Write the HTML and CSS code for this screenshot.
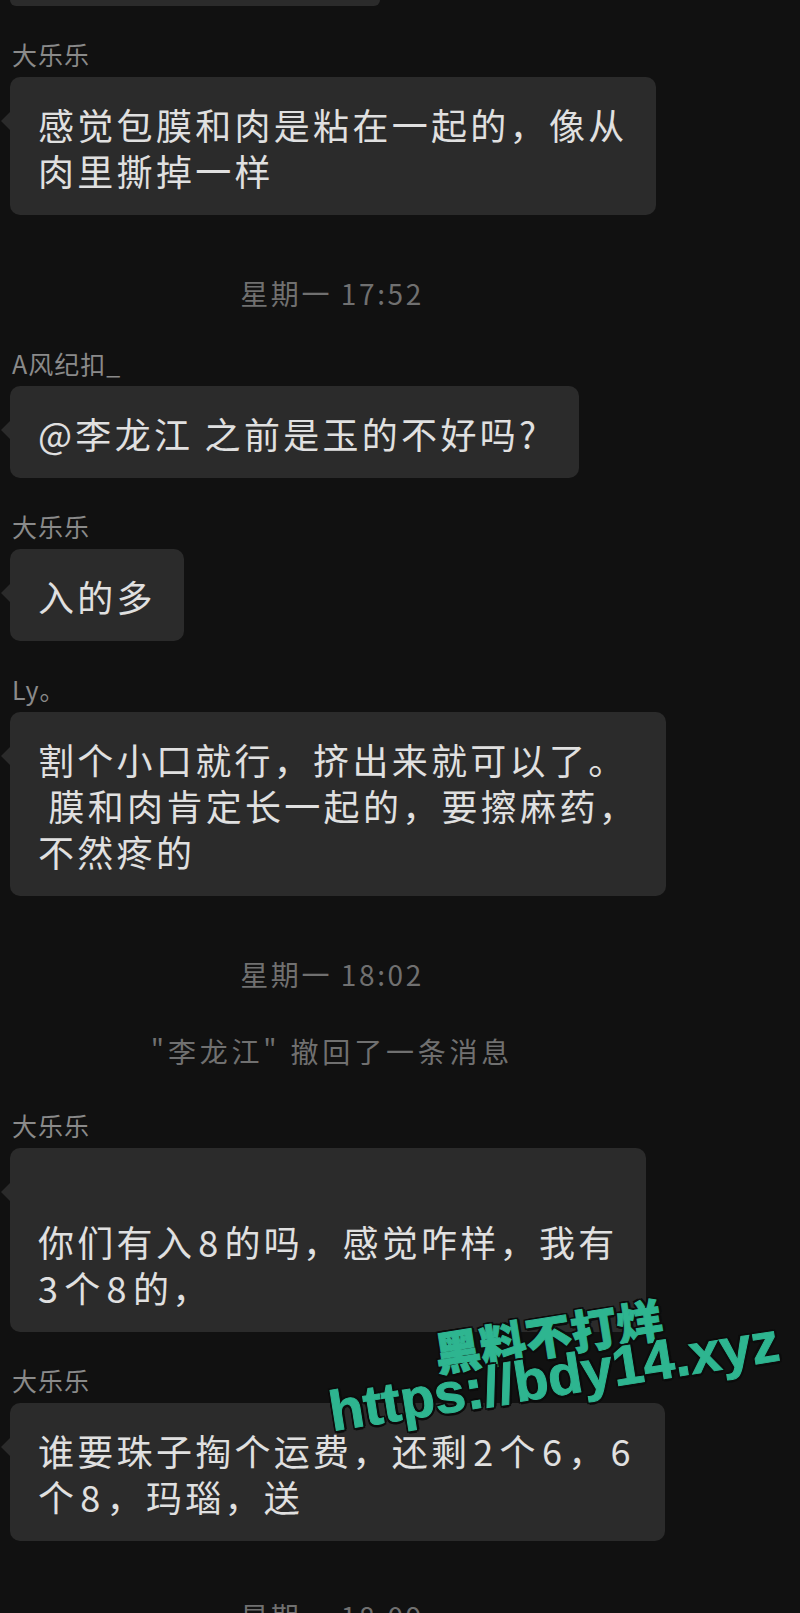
FILE: index.html
```html
<!DOCTYPE html>
<html lang="zh-CN">
<head>
    <meta charset="UTF-8">
    <meta name="viewport" content="width=device-width, initial-scale=1.0">
    <title>群聊</title>
    <link rel="stylesheet" href="styles.css">
</head>
<body>
    <div class="page">
        <div class="chat">
            <!-- previous message, scrolled off the top -->
            <div class="bubble-cut"></div>

            <div class="msg">
                <div class="name">大乐乐</div>
                <div class="bubble">感觉包膜和肉是粘在一起的，像从<br>肉里撕掉一样</div>
            </div>

            <div class="time">星期一 17:52</div>

            <div class="msg">
                <div class="name">A风纪扣_</div>
                <div class="bubble">@李龙江 之前是玉的不好吗?&nbsp;</div>
            </div>

            <div class="msg">
                <div class="name">大乐乐</div>
                <div class="bubble">入的多</div>
            </div>

            <div class="msg">
                <div class="name">Ly。</div>
                <div class="bubble">割个小口就行，挤出来就可以了。<br>&#8201;膜和肉肯定长一起的，要擦麻药，<br>不然疼的</div>
            </div>

            <div class="time">星期一 18:02</div>
            <div class="notice">"李龙江" 撤回了一条消息</div>

            <div class="msg">
                <div class="name">大乐乐</div>
                <div class="bubble"><br>你们有入<span class="num">8</span>的吗，感觉咋样，我有<br><span class="num first">3</span>个<span class="num">8</span>的，</div>
            </div>

            <div class="msg">
                <div class="name">大乐乐</div>
                <div class="bubble">谁要珠子掏个运费，还剩<span class="num">2</span>个<span class="num">6</span>，<span class="num">6</span><br>个<span class="num">8</span>，玛瑙，送</div>
            </div>

            <div class="time">星期一 18:09</div>
        </div>

        <!-- site watermark stamped over the screenshot -->
        <div class="watermark">
            <div class="wm-cn">黑料不打烊</div>
            <div class="wm-url">https://bdy14.xyz</div>
        </div>
    </div>
</body>
</html>
```

FILE: styles.css
```css
body {
    margin: 0;
    background-color: #111111;
    font-family: "Noto Sans CJK SC", "Noto Sans", sans-serif;
}

.page {
    position: relative;
    width: 800px;
    height: 1613px;
    overflow: hidden;
}

.chat {
    width: 664px;
}

.bubble-cut {
    width: 370px;
    height: 6px;
    margin-left: 10px;
    background: #2b2b2b;
    border-radius: 0 0 10px 10px;
}

.msg {
    margin-top: 33px;
    padding-left: 10px;
}

.name {
    padding-left: 2px;
    margin-bottom: 8px;
    font-size: 25px;
    line-height: 30px;
    letter-spacing: 1px;
    color: #8a8a8a;
}

.bubble {
    position: relative;
    display: inline-block;
    padding: 24px 28px 22px 28px;
    background: #2b2b2b;
    border-radius: 10px;
    color: #e0e0e0;
    font-size: 36px;
    line-height: 46px;
    letter-spacing: 3.3px;
    white-space: nowrap;
}

/* little tail on the left side */
.bubble::before {
    content: "";
    position: absolute;
    left: -9px;
    top: 35px;
    border-top: 9px solid transparent;
    border-bottom: 9px solid transparent;
    border-right: 9px solid #2b2b2b;
}

.num {
    margin: 0 3px;
}

.num.first {
    margin-left: 0;
}

.time,
.notice {
    text-align: center;
    font-size: 28px;
    line-height: 30px;
    letter-spacing: 2.6px;
    color: #707070;
}

.time {
    margin-top: 63px;
}

.time + .msg {
    margin-top: 40px;
}

.notice {
    margin-top: 47px;
    letter-spacing: 3.8px;
}

.notice + .msg {
    margin-top: 44px;
}

.msg + .time:last-child {
    margin-top: 60px;
}

.watermark {
    position: absolute;
    left: 334px;
    top: 1346px;
    transform: rotate(-9deg);
    transform-origin: 0 100%;
    color: #2eb590;
    font-weight: 700;
    white-space: nowrap;
    -webkit-text-stroke: 1px #2eb590;
    text-shadow: 2px 2px 0 #0c0c0c, -2px -2px 0 #0c0c0c, 2px -2px 0 #0c0c0c, -2px 2px 0 #0c0c0c,
        0 3px 0 #0c0c0c, 3px 0 0 #0c0c0c, 0 -2px 0 #0c0c0c, -2px 0 0 #0c0c0c;
}

.wm-cn {
    margin-left: 113px;
    font-family: "Noto Sans CJK SC", sans-serif;
    font-size: 46px;
    font-weight: 900;
    line-height: 46px;
}

.wm-url {
    margin-top: -8px;
    font-family: "Liberation Sans", Arial, sans-serif;
    font-size: 56px;
    line-height: 56px;
}
```
